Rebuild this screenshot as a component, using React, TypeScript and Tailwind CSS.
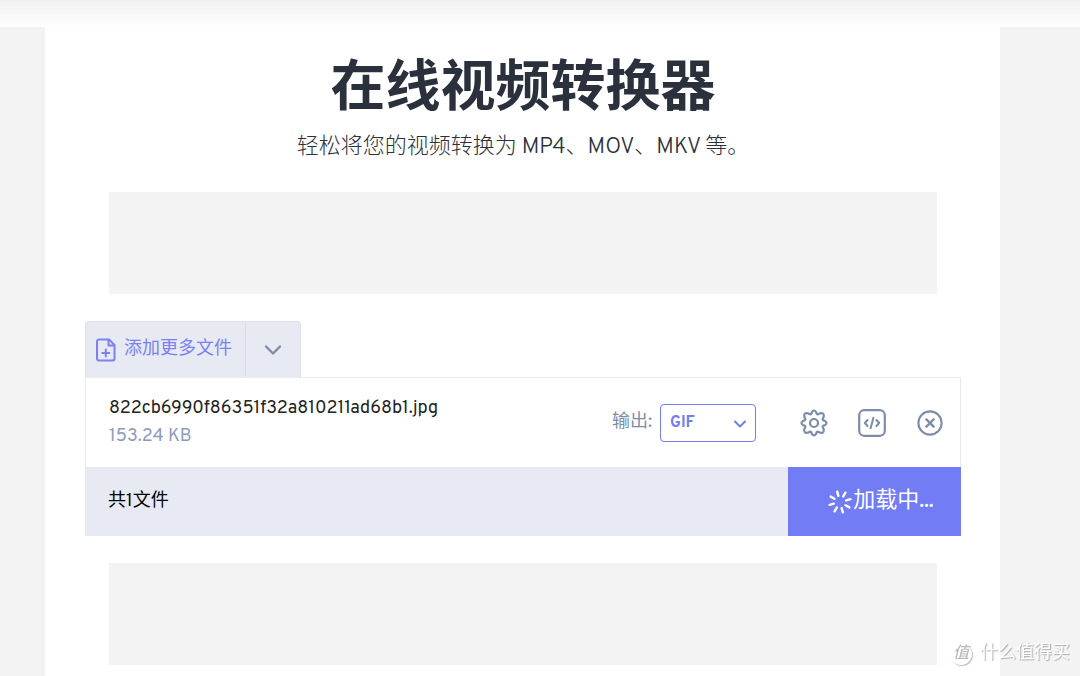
import React from "react";

const FONT = "font-['Overpass','Open_Sans','Noto_Sans_CJK_SC',sans-serif]";

// Angles of the eight spinner ticks
const SPINNER_ANGLES = [-15, 30, 75, 120, 165, 210, 255, 300];

function AdSlot() {
  return <div className="mx-6 h-[102px] bg-[#f3f3f3]" />;
}

function FileAddIcon() {
  return (
    <svg className="h-6 w-5 shrink-0" viewBox="0 0 20 24" fill="none" stroke="currentColor" strokeWidth="2" strokeLinejoin="round" strokeLinecap="round">
      <path d="M3 1.5h10l5.5 5.5v13.5a2 2 0 0 1-2 2H3a2 2 0 0 1-2-2v-17a2 2 0 0 1 2-2z" />
      <path d="M12.5 2v5.5h5.5" />
      <path d="M9.8 11.5v7M6.3 15h7" />
    </svg>
  );
}

function GearIcon() {
  return (
    <svg className="h-7 w-7" viewBox="0 0 28 28" fill="none" stroke="currentColor" strokeWidth="2.2" strokeLinejoin="round">
      <path d="M11.9 3.1 Q14 -.1 16.1 3.1 Q16.7 5.8 18 5.3 L20.2 4.3 Q24.5 3.5 23.7 7.8 L22.7 10 Q22.2 11.3 24.9 11.9 Q28.1 14 24.9 16.1 Q22.2 16.7 22.7 18 L23.7 20.2 Q24.5 24.5 20.2 23.7 L18 22.7 Q16.7 22.2 16.1 24.9 Q14 28.1 11.9 24.9 Q11.3 22.2 10 22.7 L7.8 23.7 Q3.5 24.5 4.3 20.2 L5.3 18 Q5.8 16.7 3.1 16.1 Q-.1 14 3.1 11.9 Q5.8 11.3 5.3 10 L4.3 7.8 Q3.5 3.5 7.8 4.3 L10 5.3 Q11.3 5.8 11.9 3.1z" />
      <circle cx="14" cy="14" r="4" />
    </svg>
  );
}

function CodeIcon() {
  return (
    <svg className="h-7 w-7" viewBox="0 0 28 28" fill="none" stroke="currentColor" strokeWidth="2.2" strokeLinecap="round" strokeLinejoin="round">
      <rect x="1.2" y="1.2" width="25.6" height="25.6" rx="5" />
      <path d="M9.6 11 6.8 14l2.8 3M18.4 11l2.8 3-2.8 3M15.4 8.8l-2.8 10.4" strokeWidth="2" />
    </svg>
  );
}

function CloseIcon() {
  return (
    <svg className="h-7 w-7" viewBox="0 0 28 28" fill="none" stroke="currentColor" strokeWidth="2.1" strokeLinecap="round">
      <circle cx="14" cy="14" r="11.6" />
      <path d="M10.4 10.4l7.2 7.2M17.6 10.4l-7.2 7.2" strokeWidth="2.4" />
    </svg>
  );
}

function Spinner() {
  return (
    <svg className="h-[26px] w-[26px] shrink-0" viewBox="-13 -13 26 26" stroke="#fff" strokeWidth="2.4" strokeLinecap="round">
      {SPINNER_ANGLES.map((a) => (
        <path key={a} d="M0-6.4V-10.8" transform={`rotate(${a})`} />
      ))}
    </svg>
  );
}

function Toolbar() {
  return (
    <div className="flex w-fit overflow-hidden rounded-t border border-b-0 border-[#dfe0e3] bg-[#e7eaf2]">
      <button className="flex h-[55px] items-center gap-2 border-r border-[#dcdde2] pr-[13px] pl-[10px] text-lg text-[#7b80f3]">
        <FileAddIcon />
        <span>添加更多文件</span>
      </button>
      <button aria-label="更多" className="flex w-[54px] items-center justify-center text-[#7d8ca8]">
        <svg className="h-5 w-5" viewBox="0 0 20 20" fill="none" stroke="currentColor" strokeWidth="2.4" strokeLinecap="round" strokeLinejoin="round">
          <path d="M3 6.5l7 7 7-7" />
        </svg>
      </button>
    </div>
  );
}

function FileRow() {
  return (
    <div className="flex h-[90px] items-center border border-b-0 border-[#e9ebf4] pr-4 pl-[23px]">
      <div className="min-w-0 flex-1">
        <div className="truncate text-lg leading-7 text-[#222]">822cb6990f86351f32a810211ad68b1.jpg</div>
        <div className="text-lg leading-7 text-[#8d9abb]">153.24 KB</div>
      </div>
      <label htmlFor="output" className="mr-2 text-lg text-[#7d8ca8]">输出:</label>
      <div className="relative mr-11">
        <select id="output" className="block h-[38px] w-24 appearance-none rounded border border-[#717cf5] bg-white pl-[9px] text-base font-bold text-[#717cf5]">
          <option>GIF</option>
        </select>
        <svg className="pointer-events-none absolute top-3 right-2 h-4 w-4 text-[#717cf5]" viewBox="0 0 16 16" fill="none" stroke="currentColor" strokeWidth="2" strokeLinecap="round" strokeLinejoin="round">
          <path d="M3 5.5l5 5 5-5" />
        </svg>
      </div>
      <div className="flex gap-[30px] text-[#7d8ca8]">
        <button aria-label="设置"><GearIcon /></button>
        <button aria-label="代码"><CodeIcon /></button>
        <button aria-label="移除"><CloseIcon /></button>
      </div>
    </div>
  );
}

function Watermark() {
  return (
    <div className="fixed right-[10px] bottom-[10px] flex items-center gap-2 text-lg text-white [text-shadow:1px_1px_1px_#aaa]">
      <span className="flex h-[22px] w-[22px] items-center justify-center rounded-full bg-white text-base font-medium text-[#bbb] italic shadow-[1px_1px_1px_#bbb] [text-shadow:none]">值</span>
      <span className="leading-6">什么值得买</span>
    </div>
  );
}

export default function App() {
  return (
    <div className={`flex min-h-screen flex-col bg-white ${FONT}`}>
      <header className="h-[27px] bg-linear-to-b from-[#f1f1f1] to-white" />
      <div className="flex flex-1">
        <aside className="w-[45px] shrink-0 bg-[#f3f3f3]" />
        <main className="min-w-0 flex-1 pr-[39px] pl-10">
          <h1 className="pt-[30px] text-center text-[55px] leading-[68px] font-bold text-[#2a303c]">在线视频转换器</h1>
          <p className="mt-[7px] mb-7 text-center text-[22px] leading-8 font-light text-[#2a303c]">
            轻松将您的视频转换为 MP4、MOV、MKV 等。
          </p>
          <AdSlot />
          <section className="my-[27px]">
            <Toolbar />
            <FileRow />
            <div className="flex h-[69px] bg-[#e7eaf2]">
              <p className="flex flex-1 items-center pl-[23px] text-lg text-black">共1文件</p>
              <button className="flex w-[173px] items-center justify-center bg-[#717cf5] pl-3 text-[22px] text-white">
                <Spinner />
                加载中...
              </button>
            </div>
          </section>
          <AdSlot />
        </main>
        <aside className="w-20 shrink-0 bg-[#f3f3f3]" />
      </div>
      <Watermark />
    </div>
  );
}
